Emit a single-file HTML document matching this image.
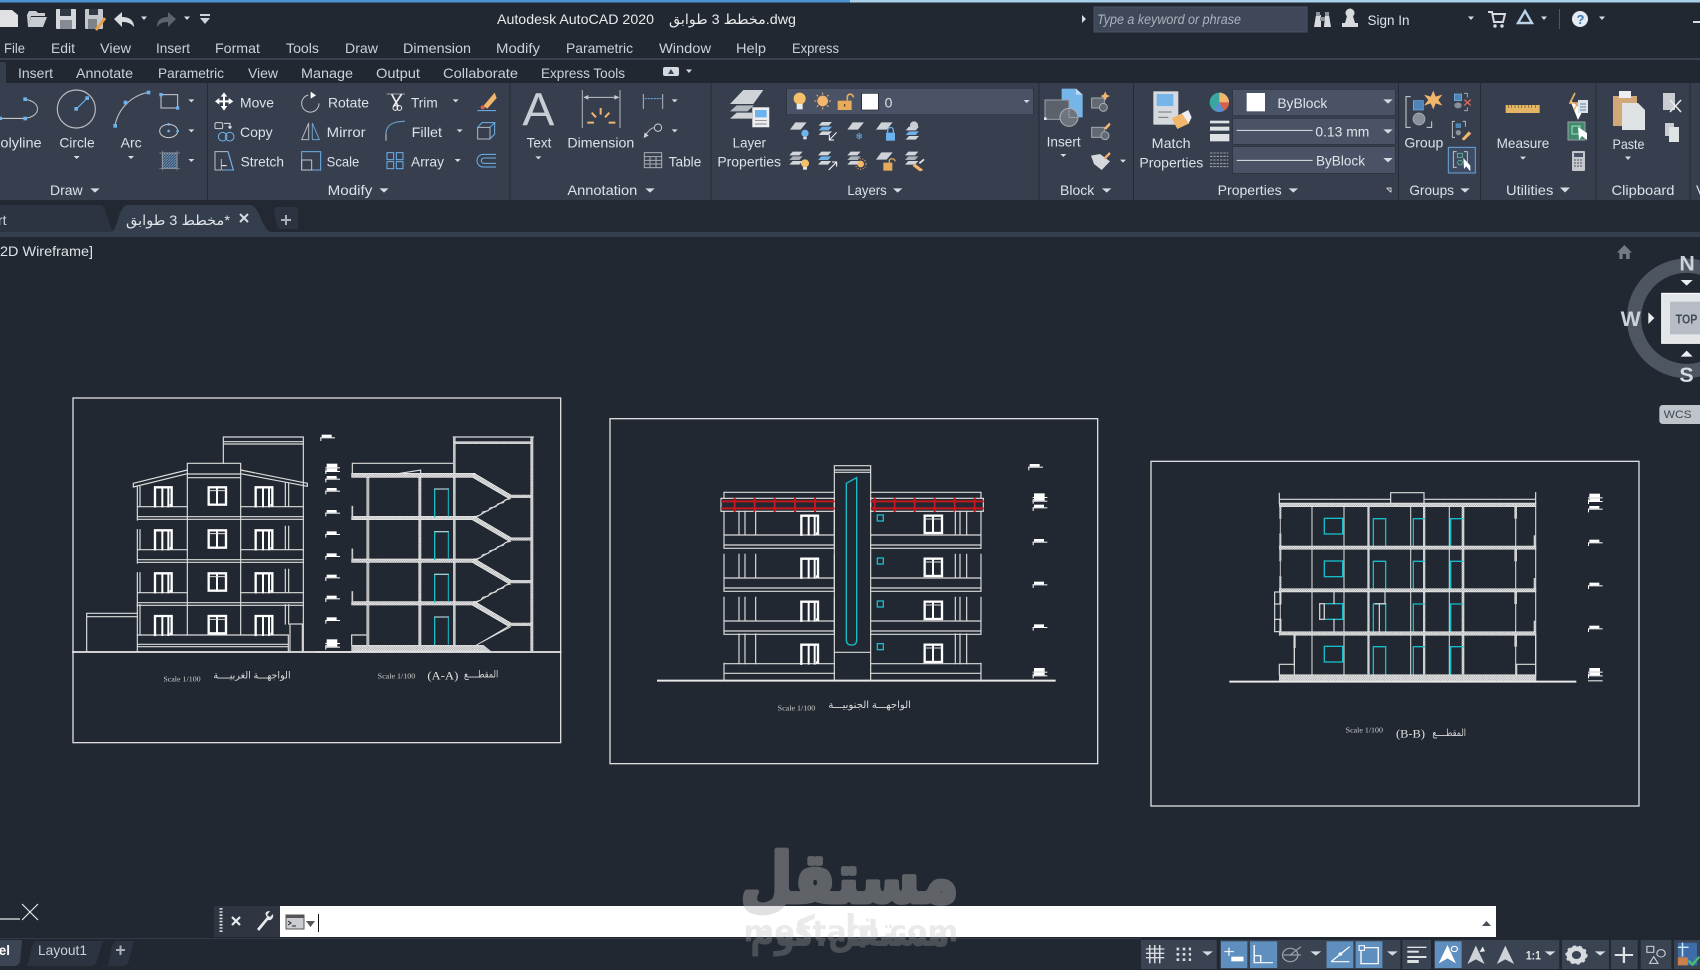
<!DOCTYPE html>
<html><head><meta charset="utf-8"><title>Autodesk AutoCAD 2020</title>
<style>
html,body{margin:0;padding:0;background:#212831;overflow:hidden}
svg{display:block;position:absolute;left:0;top:0}
text{font-family:"Liberation Sans","DejaVu Sans",sans-serif}
.m{fill:#c9d1da;font-size:14px}
.s{font-family:"Liberation Serif","DejaVu Sans",serif;fill:#cfcfcf}
.r text{fill:#d9e1e9;font-size:42px}
.ln{fill:none;stroke:#d8d8d8;stroke-width:3}
</style></head><body>
<svg width="1700" height="970" viewBox="0 0 1700 970" xmlns="http://www.w3.org/2000/svg">
<defs>
<pattern id="h" width="7" height="7" patternUnits="userSpaceOnUse"><rect width="7" height="7" fill="#e2e2e2"/><circle cx="2" cy="2" r="1.1" fill="#4a4f56"/><circle cx="5.5" cy="5.5" r="1.1" fill="#4a4f56"/></pattern>
<pattern id="hd" width="8" height="8" patternUnits="userSpaceOnUse"><rect width="8" height="8" fill="#3f4a5c"/><path d="M0,8L8,0" stroke="#6aa6dc" stroke-width="2.4"/></pattern>
<path id="a" d="M-9,-4H9L0,5Z" fill="#d5dbe2"/>
<path id="at" d="M-14,-6H14L0,7Z" fill="#d5dbe2"/>
<path id="ar" d="M-3,-1.5H3L0,2Z" fill="#d5dbe2"/>
<g id="wd" fill="none" stroke="#fff"><path d="M2,59V2H52V56" stroke-width="7"/><path d="M24,59V4M42,59V4" stroke-width="6"/><rect x="46" y="52" width="8" height="7" fill="#fff" stroke="none"/></g>
<g id="wc" fill="none" stroke="#fff"><rect x="2" y="2" width="52" height="52" stroke-width="7"/><path d="M27,2V54" stroke-width="6"/><path d="M4,12H52" stroke-width="3" stroke="#ddd"/></g>
<g id="mk" fill="#fff"><rect x="4" y="-8" width="30" height="8"/><rect x="0" y="0" width="44" height="3"/><rect x="0" y="0" width="3" height="11"/></g>
<g id="mb" fill="#fff"><rect x="4" y="-14" width="32" height="11"/><rect x="0" y="-3" width="44" height="3"/><rect x="4" y="0" width="32" height="8"/><rect x="0" y="8" width="44" height="3"/><rect x="0" y="3" width="3" height="14"/></g>
<g id="para"><path d="M0,22L16,0H50L32,22Z" fill="#cfd3d8"/></g>
<g id="stk"><path d="M0,11L10,0H40L30,11Z" fill="#d2d5d9"/><path d="M0,25L10,14H40L30,25Z" fill="#aab0b7"/><path d="M0,39L10,28H40L30,39Z" fill="#d2d5d9"/></g>
<g id="stb"><path d="M0,11L10,0H40L30,11Z" fill="#d2d5d9"/><path d="M0,25L10,14H40L30,25Z" fill="#6fb1e6"/><path d="M0,39L10,28H40L30,39Z" fill="#d2d5d9"/></g>

<!-- Section A-A floor -->
<g id="fa">
<path d="M1243,250L1358,318L1346,325L1238,262Z" fill="url(#h)" stroke="#eee" stroke-width="2"/>
<path d="M1352,326L1335,330L1330,338L1313,342L1308,350L1290,354L1285,362L1268,366L1263,374L1245,380" fill="none" stroke="#ddd" stroke-width="3"/>
<path d="M1358,318L1245,384" fill="none" stroke="#ddd" stroke-width="3"/>
<rect x="1355" y="315" width="60" height="8" fill="url(#h)" stroke="#ddd" stroke-width="1.5"/>
<rect x="875" y="379" width="370" height="10" fill="url(#h)" stroke="#eee" stroke-width="2"/>
<path d="M1124,380V297H1165" fill="none" stroke="#18bdc9" stroke-width="4"/>
<path d="M1124,297H1165" fill="none" stroke="#ccc" stroke-width="3"/>
<path d="M1165,300V380" fill="none" stroke="#18bdc9" stroke-width="3" stroke-dasharray="6 3"/>
<path d="M877,350V380" stroke="#ccc" stroke-width="5"/>
</g>

<!-- Facade west floor -->
<g id="fw" fill="none" stroke="#dcdcdc" stroke-width="3.5">
<path d="M232,350H382M542,350H730M232,380H730M232,388H730M240,290V350M232,290V390M676,280V350M686,280V350"/>
<use href="#wd" x="283" y="290"/><use href="#wc" x="444" y="290"/><use href="#wd" x="585" y="290"/>
</g>

<!-- South floor -->
<g id="fs" fill="none" stroke="#dcdcdc" stroke-width="3.5">
<path d="M372,304V415M703,304V415M417,304V375M435,304V375M467,304V375M372,375H703M372,405H703M372,415H703"/>
<path d="M812,375H1143M812,405H1143M812,415H1143M1143,304V415M1066,304V375M1080,304V375M1100,304V375"/>
<use href="#wd" x="602" y="315"/><use href="#wc" x="972" y="315"/>
<rect x="832" y="315" width="18" height="18" stroke="#18bdc9" stroke-width="4"/>
</g>

<!-- B-B floor -->
<g id="fb">
<path d="M516,170V289M612,170V289M812,170V289M928,170V289M1187,170V289" stroke="#c8c8c8" stroke-width="3.5"/>
<rect x="682" y="170" width="7" height="119" fill="url(#h)"/><rect x="849" y="170" width="7" height="119" fill="url(#h)"/><rect x="965" y="170" width="8" height="119" fill="url(#h)"/><rect x="1123" y="170" width="8" height="36" fill="url(#h)"/><path d="M1127,206V289" stroke="#c8c8c8" stroke-width="3.5"/>
<rect x="553" y="205" width="55" height="47" fill="none" stroke="#18bdc9" stroke-width="4"/>
<path d="M700,289V206H737V289M820,289V206H852M932,289V206H968" fill="none" stroke="#18bdc9" stroke-width="4"/>
</g>
</defs>

<rect width="1700" height="970" fill="#212831"/>
<!-- top bar -->
<rect width="1700" height="2.5" fill="#4c94cf"/>
<rect x="850" width="850" height="2.5" fill="#a9d2ea"/>

<!-- QAT -->
<g>
<path d="M0,10H12L18,15V27H0Z" fill="#dfe1e3"/>
<path d="M27,15L29,11H36L38,13H45V16H31L28,27Z M31,17H47L43,27H28Z" fill="#c9ccd0"/>
<rect x="56" y="9" width="20" height="20" rx="1" fill="#d5d7da"/><rect x="60" y="9" width="11" height="7" fill="#323a46"/><rect x="60" y="20" width="12" height="9" fill="#878c94"/>
<rect x="85" y="9" width="18" height="20" rx="1" fill="#c4c7cb"/><rect x="89" y="9" width="9" height="6" fill="#323a46"/><rect x="88" y="19" width="9" height="10" fill="#7e838b"/><path d="M96,30L105,18" stroke="#e8a04a" stroke-width="3"/>
<path d="M114,19L122,12V17C129,17 134,20 134,27C131,23 127,22 122,22V27Z" fill="#d9dbde"/>
<path d="M176,19L168,12V17C161,17 157,20 157,27C160,23 163,22 168,22V27Z" fill="#5c636d"/>
<use href="#ar" x="144" y="18"/><use href="#ar" x="187" y="18"/>
<rect x="200" y="14" width="10" height="2" fill="#cfd3d8"/><path d="M200,18H210L205,24Z" fill="#cfd3d8"/>
</g>
<text x="497" y="24" fill="#e8eaec" font-size="14" textLength="157" lengthAdjust="spacingAndGlyphs">Autodesk AutoCAD 2020</text>
<text x="669" y="24" fill="#e8eaec" font-size="14" textLength="127" lengthAdjust="spacingAndGlyphs">مخطط 3 طوابق.dwg</text>

<path d="M1082,15L1086,19L1082,23Z" fill="#d5dbe2"/>
<rect x="1094" y="7" width="213" height="25" fill="#3f4859" stroke="#4a5568"/>
<text x="1097" y="24" fill="#a9b2bc" font-size="13.5" font-style="italic" textLength="144" lengthAdjust="spacingAndGlyphs">Type a keyword or phrase</text>
<path d="M1314,27L1316,15H1321L1321,27ZM1324,27L1325,15H1329L1331,27Z" fill="#d8dadd"/><rect x="1316" y="12" width="4" height="4" fill="#8d929a"/><rect x="1325" y="12" width="4" height="4" fill="#8d929a"/><rect x="1320" y="17" width="5" height="4" fill="#8d929a"/>
<circle cx="1350" cy="13" r="4.5" fill="#d8dadd"/><path d="M1347,16H1353L1355,23H1358V27H1342V23H1345Z" fill="#d8dadd"/>
<text x="1367.5" y="25" fill="#dfe3e7" font-size="14" textLength="42" lengthAdjust="spacingAndGlyphs">Sign In</text>
<use href="#ar" x="1471" y="18"/>
<path d="M1488,12H1492L1494,22H1503L1505,14H1493" fill="none" stroke="#d8dadd" stroke-width="2"/><circle cx="1495" cy="26" r="1.7" fill="#d8dadd"/><circle cx="1502" cy="26" r="1.7" fill="#d8dadd"/>
<path d="M1525,11L1532,23H1518Z" fill="none" stroke="#b9d2e8" stroke-width="2.4"/>
<use href="#ar" x="1544" y="18"/>
<rect x="1559" y="9" width="1" height="20" fill="#4c5563"/>
<circle cx="1580" cy="19" r="8" fill="#e5ebf1"/><text x="1576.5" y="24" font-size="13" font-weight="bold" fill="#3d78b1">?</text>
<use href="#ar" x="1602" y="18"/>
<rect x="1693" y="21" width="7" height="2" fill="#d8dadd"/>

<!-- Menu -->
<g class="m">
<text class="m" x="4" y="53" textLength="21" lengthAdjust="spacingAndGlyphs">File</text>
<text class="m" x="51" y="53" textLength="24" lengthAdjust="spacingAndGlyphs">Edit</text>
<text class="m" x="100" y="53" textLength="31" lengthAdjust="spacingAndGlyphs">View</text>
<text class="m" x="156" y="53" textLength="34" lengthAdjust="spacingAndGlyphs">Insert</text>
<text class="m" x="215" y="53" textLength="45" lengthAdjust="spacingAndGlyphs">Format</text>
<text class="m" x="286" y="53" textLength="33" lengthAdjust="spacingAndGlyphs">Tools</text>
<text class="m" x="345" y="53" textLength="33" lengthAdjust="spacingAndGlyphs">Draw</text>
<text class="m" x="403" y="53" textLength="68" lengthAdjust="spacingAndGlyphs">Dimension</text>
<text class="m" x="496" y="53" textLength="44" lengthAdjust="spacingAndGlyphs">Modify</text>
<text class="m" x="566" y="53" textLength="67" lengthAdjust="spacingAndGlyphs">Parametric</text>
<text class="m" x="659" y="53" textLength="52" lengthAdjust="spacingAndGlyphs">Window</text>
<text class="m" x="736" y="53" textLength="30" lengthAdjust="spacingAndGlyphs">Help</text>
<text class="m" x="792" y="53" textLength="47" lengthAdjust="spacingAndGlyphs">Express</text>
</g>
<rect y="58" width="1700" height="2" fill="#39424f"/>
<!-- Ribbon tabs -->
<path d="M0,62H4Q6,62 6,64V83H0Z" fill="#353e4c"/>
<text class="m" x="18" y="78" textLength="35" lengthAdjust="spacingAndGlyphs">Insert</text>
<text class="m" x="76" y="78" textLength="57" lengthAdjust="spacingAndGlyphs">Annotate</text>
<text class="m" x="158" y="78" textLength="66" lengthAdjust="spacingAndGlyphs">Parametric</text>
<text class="m" x="248" y="78" textLength="30" lengthAdjust="spacingAndGlyphs">View</text>
<text class="m" x="301" y="78" textLength="52" lengthAdjust="spacingAndGlyphs">Manage</text>
<text class="m" x="376" y="78" textLength="44" lengthAdjust="spacingAndGlyphs">Output</text>
<text class="m" x="443" y="78" textLength="75" lengthAdjust="spacingAndGlyphs">Collaborate</text>
<text class="m" x="541" y="78" textLength="84" lengthAdjust="spacingAndGlyphs">Express Tools</text>
<rect x="663" y="67" width="16" height="9" rx="2" fill="#d5d9dd"/><path d="M668,74L671,69L674,74Z" fill="#3a4250"/>
<use href="#ar" x="689" y="71"/>

<!-- Ribbon -->
<rect y="83" width="1700" height="117" fill="#373f4e"/>
<path d="M207.5,83V200M510,83V200M711,83V200M1039,83V200M1133.5,83V200M1398.5,83V200M1480.5,83V200M1596,83V200M1690,83V200" stroke="#262c37" stroke-width="1"/>

<!-- Draw & Modify -->
<g class="r" transform="translate(0,84) scale(.33333)">
<path d="M0,103H75" class="ln" stroke="#cfd3d7"/><path d="M75,46C125,52 125,98 75,103" fill="none" stroke="#bfc3c8" stroke-width="3"/>
<g fill="#6cb2ec"><rect x="70" y="40" width="11" height="11"/><rect x="70" y="98" width="11" height="11"/><rect x="-4" y="98" width="10" height="10"/></g>
<circle cx="229" cy="75" r="57" fill="none" stroke="#b8bcc2" stroke-width="3.5"/><path d="M229,75L262,42" stroke="#6cb2ec" stroke-width="3.5"/><rect x="223" y="69" width="11" height="11" fill="#6cb2ec"/><rect x="256" y="37" width="11" height="11" fill="#6cb2ec"/>
<path d="M345,125C355,72 395,35 445,25" fill="none" stroke="#b8bcc2" stroke-width="3.5"/><g fill="#6cb2ec"><rect x="340" y="120" width="11" height="11"/><rect x="371" y="50" width="11" height="11"/><rect x="440" y="20" width="11" height="11"/></g>
<rect x="483" y="32" width="50" height="40" fill="none" stroke="#c9cdd2" stroke-width="3"/><rect x="478" y="27" width="10" height="10" fill="#6cb2ec"/><rect x="528" y="67" width="10" height="10" fill="#6cb2ec"/>
<ellipse cx="506" cy="141" rx="27" ry="20" fill="none" stroke="#c9cdd2" stroke-width="3"/><circle cx="506" cy="141" r="4" fill="#6cb2ec"/><circle cx="506" cy="121" r="4" fill="#6cb2ec"/><circle cx="533" cy="141" r="4" fill="#6cb2ec"/>
<rect x="487" y="207" width="44" height="46" fill="url(#hd)" stroke="#a8adb4" stroke-width="3"/><path d="M478,207H540M478,253H540M487,200V260M531,200V260" stroke="#8d939b" stroke-width="2"/>
<text x="-28" y="191" textLength="153" lengthAdjust="spacingAndGlyphs">Polyline</text>
<text x="178" y="191" textLength="106" lengthAdjust="spacingAndGlyphs">Circle</text>
<text x="362" y="191" textLength="63" lengthAdjust="spacingAndGlyphs">Arc</text>
<use href="#a" x="230" y="220"/><use href="#a" x="393" y="220"/><use href="#a" x="574" y="50"/><use href="#a" x="574" y="140"/><use href="#a" x="574" y="229"/>
<text x="150" y="333" textLength="98" lengthAdjust="spacingAndGlyphs">Draw</text><use href="#at" x="285" y="319"/>

<g fill="#fff"><path d="M645,52L658,42V49H669V38H662L672,25L682,38H675V49H686V42L700,52L686,62V55H675V66H682L672,80L662,66H669V55H658V62Z"/></g>
<text x="720" y="70" textLength="102" lengthAdjust="spacingAndGlyphs">Move</text>
<rect x="645" y="116" width="23" height="18" rx="4" fill="none" stroke="#cfd3d7" stroke-width="3"/><path d="M672,118H690V128" fill="none" stroke="#dfe2e5" stroke-width="3"/><path d="M683,127H697L690,136Z" fill="#dfe2e5"/>
<circle cx="668" cy="158" r="13" fill="none" stroke="#6cb2ec" stroke-width="3"/><circle cx="689" cy="158" r="13" fill="none" stroke="#6cb2ec" stroke-width="3"/>
<text x="720" y="159" textLength="98" lengthAdjust="spacingAndGlyphs">Copy</text>
<path d="M664,258H645V203H684L700,258H666" fill="none" stroke="#bcc0c6" stroke-width="3"/><path d="M684,203L700,258H668" fill="none" stroke="#6cb2ec" stroke-width="3"/><path d="M664,245H680" stroke="#fff" stroke-width="3"/><path d="M664,225V258" stroke="#bcc0c6" stroke-width="3"/>
<text x="722" y="248" textLength="130" lengthAdjust="spacingAndGlyphs">Stretch</text>
<path d="M925,33A26,26 0 1 0 957,58" fill="none" stroke="#c0c4c9" stroke-width="3"/><path d="M932,23L948,34L932,44Z" fill="#fff"/>
<text x="984" y="70" textLength="123" lengthAdjust="spacingAndGlyphs">Rotate</text>
<path d="M905,167L926,117V167Z" fill="none" stroke="#b4b8be" stroke-width="3"/><path d="M937,117L958,167H937Z" fill="none" stroke="#6c9fca" stroke-width="3"/>
<text x="980" y="159" textLength="117" lengthAdjust="spacingAndGlyphs">Mirror</text>
<rect x="905" y="203" width="57" height="55" fill="none" stroke="#6cb2ec" stroke-width="3"/><rect x="905" y="228" width="30" height="30" fill="none" stroke="#c0c4c9" stroke-width="3"/>
<text x="980" y="248" textLength="98" lengthAdjust="spacingAndGlyphs">Scale</text>
<path d="M1160,30H1215" stroke="#9ea3aa" stroke-width="3"/><path d="M1175,30L1195,68M1205,30L1180,68" stroke="#eee" stroke-width="5"/><circle cx="1186" cy="72" r="7" fill="none" stroke="#eee" stroke-width="3"/><circle cx="1198" cy="72" r="7" fill="none" stroke="#eee" stroke-width="3"/>
<text x="1233" y="70" textLength="80" lengthAdjust="spacingAndGlyphs">Trim</text><use href="#a" x="1367" y="50"/>
<path d="M1158,170V150" stroke="#b4b8be" stroke-width="3.5"/><path d="M1158,150C1158,125 1175,112 1215,112" fill="none" stroke="#6c9fca" stroke-width="3.5"/>
<text x="1235" y="159" textLength="91" lengthAdjust="spacingAndGlyphs">Fillet</text><use href="#a" x="1379" y="140"/>
<g fill="none" stroke="#6cb2ec" stroke-width="3"><rect x="1161" y="206" width="20" height="21"/><rect x="1189" y="206" width="20" height="21"/><rect x="1161" y="233" width="20" height="21"/><rect x="1189" y="233" width="20" height="21"/></g>
<text x="1233" y="248" textLength="99" lengthAdjust="spacingAndGlyphs">Array</text><use href="#a" x="1373" y="229"/>
<path d="M1450,66L1484,26L1490,42L1462,74Z" fill="#f2b56c"/><circle cx="1448" cy="70" r="6" fill="#e45c4a"/><path d="M1432,80H1488" stroke="#6cb2ec" stroke-width="3"/>
<path d="M1433,130H1470V165H1433Z" fill="none" stroke="#b4b8be" stroke-width="3"/><path d="M1433,130L1446,116H1484L1470,130M1484,116V150L1470,165" fill="none" stroke="#6cb2ec" stroke-width="3"/>
<path d="M1488,211H1450A18,18 0 0 0 1450,249H1488M1488,222H1452A8,8 0 0 0 1452,238H1488" fill="none" stroke="#6cb2ec" stroke-width="3"/>
<text x="983" y="333" textLength="134" lengthAdjust="spacingAndGlyphs">Modify</text><use href="#at" x="1152" y="319"/>
</g>

<!-- Annotation, Layers -->
<g class="r" transform="translate(510,84) scale(.33333)">
<text x="37" y="125" style="font-size:138px;fill:#c8cdd3" textLength="96" lengthAdjust="spacingAndGlyphs">A</text>
<text x="50" y="191" textLength="74" lengthAdjust="spacingAndGlyphs">Text</text><use href="#a" x="85" y="221"/>
<path d="M217,18V132M330,18V132" stroke="#b4b8be" stroke-width="3"/><path d="M222,40H326" stroke="#c0c4c9" stroke-width="3"/><path d="M220,40L235,33V47ZM328,40L313,33V47Z" fill="#c9cdd2"/>
<g stroke="#f2b56c" stroke-width="6"><path d="M272,72V92M245,86L258,100M298,86L285,100M232,116H252M296,116H316"/></g>
<text x="172" y="190" textLength="201" lengthAdjust="spacingAndGlyphs">Dimension</text>
<path d="M400,30V75M458,30V75" stroke="#b4b8be" stroke-width="3"/><path d="M404,44H454" stroke="#6cb2ec" stroke-width="3" stroke-dasharray="6 3"/><use href="#a" x="494" y="50"/>
<circle cx="444" cy="131" r="11" fill="none" stroke="#cfd3d7" stroke-width="3"/><path d="M433,131C422,132 415,142 405,155" fill="none" stroke="#b4b8be" stroke-width="3"/><path d="M401,162L404,145L416,155Z" fill="#cfd3d7"/><use href="#a" x="494" y="140"/>
<g fill="none" stroke="#a9aeb5" stroke-width="3"><rect x="403" y="206" width="52" height="45"/><path d="M403,218H455M403,229H455M403,240H455M420,218V251M438,218V251"/></g>
<text x="476" y="248" textLength="98" lengthAdjust="spacingAndGlyphs">Table</text>
<text x="172" y="333" textLength="210" lengthAdjust="spacingAndGlyphs">Annotation</text><use href="#at" x="420" y="319"/>

<g><path d="M660,60L700,18H760L730,60Z" fill="#cfd3d8"/><path d="M660,82L680,64H732L712,82Z" fill="#b3b8be"/><path d="M660,104L680,86H728V104Z" fill="#cfd3d8"/></g>
<rect x="727" y="70" width="51" height="60" fill="#eceef0" stroke="#8a9099"/><rect x="735" y="78" width="35" height="22" fill="#6cb2ec"/><path d="M735,110H770M735,120H770" stroke="#666" stroke-width="2"/>
<text x="668" y="190" textLength="100" lengthAdjust="spacingAndGlyphs">Layer</text>
<text x="622" y="248" textLength="191" lengthAdjust="spacingAndGlyphs">Properties</text>
<rect x="830" y="13" width="740" height="79" fill="#4a5366" stroke="#2b323e" stroke-width="2"/>
<circle cx="869" cy="44" r="18" fill="#f5c26b"/><path d="M860,60H878V76H860Z" fill="#e8eaec"/>
<circle cx="938" cy="51" r="16" fill="#f2b66d"/><path d="M938,26V76M913,51H963M920,33L956,69M956,33L920,69" stroke="#f2b66d" stroke-width="3" stroke-dasharray="6 38" stroke-dashoffset="0"/>
<rect x="983" y="50" width="42" height="28" fill="#e7a95a"/><path d="M1012,50V38C1012,28 1030,28 1030,40" fill="none" stroke="#e7a95a" stroke-width="5"/><rect x="1002" y="60" width="4" height="8" fill="#5a4a30"/>
<rect x="1055" y="28" width="50" height="50" fill="#fff" stroke="#1a1f26" stroke-width="2"/>
<text x="1124" y="70" style="fill:#dfe3e7">0</text>
<use href="#a" x="1550" y="52"/>
<!-- row 1 -->
<use href="#para" x="840" y="115"/><circle cx="885" cy="148" r="11" fill="#6cb2ec"/><rect x="880" y="158" width="10" height="8" fill="#dfe2e5"/>
<use href="#stb" x="926" y="114"/><path d="M980,145L960,166M958,153V168H972" stroke="#fff" stroke-width="3" fill="none"/>
<use href="#para" x="1012" y="115"/><text x="1036" y="166" style="font-size:28px;fill:#6cb2ec">❄</text>
<use href="#para" x="1098" y="115"/><rect x="1128" y="146" width="27" height="24" fill="#6cb2ec"/><path d="M1133,146V138C1133,128 1150,128 1150,138V146" fill="none" stroke="#6cb2ec" stroke-width="4"/>
<use href="#stb" x="1187" y="128"/><circle cx="1212" cy="124" r="12" fill="#c9cdd2"/>
<!-- row 2 -->
<use href="#stk" x="838" y="203"/><circle cx="885" cy="238" r="12" fill="#f5c26b"/><rect x="879" y="249" width="12" height="8" fill="#dfe2e5"/>
<use href="#stb" x="924" y="203"/><path d="M956,258L978,236M966,234H980V248" stroke="#fff" stroke-width="3" fill="none"/>
<use href="#stk" x="1012" y="203"/><circle cx="1052" cy="240" r="10" fill="#f2b66d"/><circle cx="1052" cy="240" r="16" fill="none" stroke="#f2b66d" stroke-width="3" stroke-dasharray="3 5"/>
<use href="#para" x="1098" y="205"/><rect x="1120" y="236" width="27" height="24" fill="#e7a95a"/><path d="M1138,236V230C1138,222 1155,222 1155,232" fill="none" stroke="#e7a95a" stroke-width="4"/>
<use href="#stk" x="1185" y="203"/><path d="M1214,238L1240,258L1230,262L1208,246Z" fill="#f2b56c"/><path d="M1228,238L1242,226" stroke="#e8eaec" stroke-width="5"/>
<text x="1012" y="333" textLength="118" lengthAdjust="spacingAndGlyphs">Layers</text><use href="#at" x="1163" y="319"/>
</g>

<!-- Block, Properties, Groups, Utilities -->
<g class="r" transform="translate(1040,84) scale(.33333)">
<path d="M65,14H108L128,32V100H65Z" fill="#76b5e8"/><path d="M108,14L128,32H108Z" fill="#bcdcf4"/>
<rect x="15" y="48" width="72" height="58" fill="#5b626c" stroke="#9aa0a8" stroke-width="3"/><circle cx="87" cy="100" r="27" fill="#6e747d" stroke="#aab0b7" stroke-width="3"/><path d="M87,75V100H112" stroke="#aab0b7" stroke-width="2" fill="none"/><rect x="12" y="100" width="8" height="8" fill="#e2e4e6"/>
<text x="20" y="188" textLength="102" lengthAdjust="spacingAndGlyphs">Insert</text><use href="#a" x="70" y="214"/>
<g><rect x="155" y="42" width="38" height="30" fill="#626973" stroke="#a6acb3" stroke-width="3"/><circle cx="190" cy="70" r="12" fill="#626973" stroke="#a6acb3" stroke-width="3"/><path d="M196,22L200,32L210,36L200,41L196,50L191,41L182,36L191,32Z" fill="#f2b56c"/></g>
<g><rect x="155" y="130" width="38" height="30" fill="#626973" stroke="#a6acb3" stroke-width="3"/><circle cx="195" cy="155" r="12" fill="#626973" stroke="#a6acb3" stroke-width="3"/><path d="M192,132L208,116L212,122L198,138Z" fill="#f2b56c"/></g>
<path d="M153,215L180,210L210,232L185,258L162,240Z" fill="#d5d8dc"/><path d="M190,222L208,204L212,210L196,226Z" fill="#f2b56c"/><use href="#a" x="249" y="231"/>
<text x="60" y="333" textLength="103" lengthAdjust="spacingAndGlyphs">Block</text><use href="#at" x="200" y="319"/>

<rect x="340" y="22" width="75" height="100" fill="#d6d9dd"/><rect x="350" y="30" width="50" height="36" fill="#76b5e8"/><path d="M355,84H395M355,100H385" stroke="#777" stroke-width="3"/>
<path d="M395,103L425,88L448,118L412,135Z" fill="#f2b56c"/><path d="M425,88L445,78L455,100L446,118Z" fill="#eceef0"/>
<text x="335" y="192" textLength="117" lengthAdjust="spacingAndGlyphs">Match</text><text x="298" y="250" textLength="192" lengthAdjust="spacingAndGlyphs">Properties</text>
<circle cx="538" cy="55" r="29" fill="#3aa6a0"/><path d="M538,55V26A29,29 0 0 1 567,55Z" fill="#f2b56c"/><path d="M538,55H567A29,29 0 0 1 552,80Z" fill="#d95f4a"/><path d="M538,55L552,80A29,29 0 0 1 520,78Z" fill="#5c8fd0"/>
<g fill="#dfe2e5"><rect x="510" y="110" width="58" height="8"/><rect x="510" y="128" width="58" height="12"/><rect x="510" y="150" width="58" height="22"/></g>
<path d="M510,207H565M510,217H565M510,228H565M510,239H565M510,248H565" stroke="#b9bdc3" stroke-width="2.5" stroke-dasharray="7 3"/>
<g fill="#4a5366" stroke="#2b323e" stroke-width="2"><rect x="578" y="16" width="488" height="79"/><rect x="578" y="103" width="488" height="78"/><rect x="578" y="188" width="488" height="80"/></g>
<rect x="620" y="27" width="55" height="55" fill="#fff"/><text x="712" y="72" textLength="150" lengthAdjust="spacingAndGlyphs" style="fill:#e0e4e9">ByBlock</text>
<path d="M590,139H818" stroke="#e0e4e9" stroke-width="3"/><text x="826" y="158" textLength="162" lengthAdjust="spacingAndGlyphs" style="fill:#e0e4e9">0.13 mm</text>
<path d="M590,229H818" stroke="#e0e4e9" stroke-width="3"/><text x="828" y="245" textLength="147" lengthAdjust="spacingAndGlyphs" style="fill:#e0e4e9">ByBlock</text>
<use href="#at" x="1044" y="52"/><use href="#at" x="1044" y="142"/><use href="#at" x="1044" y="228"/>
<text x="533" y="333" textLength="192" lengthAdjust="spacingAndGlyphs">Properties</text><use href="#at" x="760" y="319"/>
<path d="M1040,312H1053V325M1040,312L1053,325" stroke="#cfd3d7" stroke-width="3" fill="none"/>

<path d="M1112,38H1098V130H1112M1160,130H1175V112" fill="none" stroke="#cfd3d7" stroke-width="3"/>
<rect x="1120" y="50" width="30" height="28" fill="#4f85b6" stroke="#76b5e8" stroke-width="2"/><circle cx="1137" cy="105" r="18" fill="#8a9099" stroke="#b4b8be" stroke-width="2"/>
<path d="M1180,20L1187,38L1207,32L1195,48L1207,65L1187,58L1180,76L1172,58L1152,65L1165,48L1152,32L1172,38Z" fill="#f2b56c"/>
<text x="1093" y="190" textLength="117" lengthAdjust="spacingAndGlyphs">Group</text>
<rect x="1243" y="30" width="22" height="20" fill="#4f85b6" stroke="#76b5e8" stroke-width="2"/><ellipse cx="1254" cy="64" rx="11" ry="9" fill="#8a9099"/><path d="M1272,28H1282V40M1282,70V80H1272" stroke="#b4b8be" stroke-width="2.5" fill="none"/><path d="M1273,47L1292,64M1292,47L1273,64" stroke="#e06a55" stroke-width="4"/>
<path d="M1245,112H1237V160H1245M1268,112H1276V128" stroke="#cfd3d7" stroke-width="2.5" fill="none"/><rect x="1247" y="118" width="16" height="14" fill="#4f85b6"/><circle cx="1255" cy="146" r="8" fill="#8a9099"/><path d="M1265,165L1286,142L1294,149L1272,170Z" fill="#f2b56c"/>
<rect x="1225" y="190" width="81" height="77" fill="#3e4b62" stroke="#6aa6dc" stroke-width="3"/><path d="M1250,203H1240V250H1250M1272,203H1282V250" stroke="#d5d8dc" stroke-width="2.5" fill="none"/><rect x="1252" y="208" width="15" height="12" fill="none" stroke="#5fc48d" stroke-width="2.5"/><circle cx="1260" cy="236" r="7" fill="none" stroke="#5fc48d" stroke-width="2.5"/><path d="M1270,222L1272,255L1279,247L1291,262L1291,245Z" fill="#fff"/>
<text x="1108" y="333" textLength="134" lengthAdjust="spacingAndGlyphs">Groups</text><use href="#at" x="1275" y="319"/>

<rect x="1397" y="63" width="102" height="24" fill="#e3b565"/><path d="M1405,63V72M1415,63V72M1425,63V72M1435,63V72M1445,63V72M1455,63V72M1465,63V72M1475,63V72M1487,63V72" stroke="#6d5a30" stroke-width="2"/>
<text x="1370" y="192" textLength="158" lengthAdjust="spacingAndGlyphs">Measure</text><use href="#a" x="1449" y="222"/>
<text x="1398" y="333" textLength="142" lengthAdjust="spacingAndGlyphs">Utilities</text>
</g>
<path d="M1560,187.5H1570L1565,192.5Z" fill="#d5dbe2"/>
<!-- far right ribbon -->
<path d="M1570,100L1578,120L1583,110Z" fill="#fff"/><path d="M1575,93L1570,103H1578L1574,110" fill="none" stroke="#f2b56c" stroke-width="1.6"/><rect x="1578" y="100" width="10" height="13" fill="#dfe2e5"/><path d="M1580,104H1586M1580,107H1586M1580,110H1586" stroke="#4f85b6"/>
<rect x="1568" y="122" width="17" height="18" fill="#3f8a6a" stroke="#9aa0a8"/><rect x="1572" y="126" width="8" height="8" fill="none" stroke="#a7e0c2" stroke-width="1"/><path d="M1578,127L1579,140L1582,136L1587,140L1587,133Z" fill="#fff"/>
<rect x="1572" y="151" width="13" height="20" rx="1" fill="#c4c8cd"/><rect x="1574" y="153" width="9" height="4" fill="#4a5160"/><path d="M1574,160H1583M1574,163H1583M1574,166H1583" stroke="#4a5160" stroke-dasharray="2 1"/>
<rect x="1613" y="96" width="24" height="30" fill="#d3a878"/><rect x="1619" y="91" width="12" height="7" fill="#eceef0"/><path d="M1622,103H1638L1645,110V130H1622Z" fill="#dfe2e5"/>
<text x="1612.5" y="149" font-size="14" fill="#d9e1e9" textLength="32" lengthAdjust="spacingAndGlyphs">Paste</text><use href="#ar" x="1628" y="158"/>
<rect x="1663" y="93" width="12" height="17" fill="#c9cdd2"/><path d="M1670,100L1681,112M1681,100L1670,112" stroke="#e8eaec" stroke-width="1.6"/>
<rect x="1665" y="123" width="9" height="13" fill="#c9cdd2"/><rect x="1669" y="127" width="10" height="15" fill="#e0e3e6"/>
<text x="1611.5" y="195" font-size="14" fill="#d9e1e9" textLength="63" lengthAdjust="spacingAndGlyphs">Clipboard</text>
<text x="1696" y="195" font-size="14" fill="#d9e1e9">V</text>

<!-- Doc tabs -->
<rect y="200" width="1700" height="32" fill="#222933"/>
<path d="M0,205H100C108,205 108,232 115,232H0Z" fill="#2d3441"/>
<text x="-2" y="225" font-size="14" fill="#c9d1da">rt</text>
<path d="M111,232C118,232 118,205 128,205H250C260,205 262,232 272,232Z" fill="#353e4c"/>
<text x="126" y="225" font-size="14" fill="#dfe3e7" textLength="104" lengthAdjust="spacingAndGlyphs">مخطط 3 طوابق*</text>
<path d="M240,214L248,222M248,214L240,222" stroke="#d5dbe2" stroke-width="2"/>
<path d="M274,210Q274,207 277,207H296Q298,207 298,210V229H280C276,229 276,220 274,210Z" fill="#2d3441"/>
<path d="M281,220H291M286,215V225" stroke="#a9b0b8" stroke-width="2"/>
<rect y="232" width="1700" height="5" fill="#353e4c"/>

<text x="-4" y="256" font-size="14" fill="#dfe3e7" textLength="97" lengthAdjust="spacingAndGlyphs">[2D Wireframe]</text>

<!-- Drawing A -->
<g transform="translate(60,390) scale(.33333)" stroke-linecap="square">
<rect x="39" y="24" width="1463" height="1034" fill="none" stroke="#dcdcdc" stroke-width="4"/>
<path d="M39,786H1502" stroke="#e8e8e8" stroke-width="5"/>
<g fill="none" stroke="#dcdcdc" stroke-width="3.5">
<path d="M490,220V141H730V786M490,155H730M490,162H730"/>
<path d="M382,735V220H542V735M382,252H542M382,263H542"/>
<path d="M220,280L382,240M220,291L382,251M220,280V291M542,240L742,280M542,251L742,289M742,280V289"/>
<path d="M232,735V786M232,735H685V786M232,763H685M232,770H685"/>
<path d="M232,644V735M240,644V735M676,644V702M686,644V702"/>
<rect x="690" y="702" width="37" height="84"/>
<path d="M80,786V670H232M80,680H232"/>
</g>
<use href="#fw" x="0" y="0"/><use href="#fw" x="0" y="129"/><use href="#fw" x="0" y="258"/>
<g fill="none" stroke="#dcdcdc" stroke-width="3.5"><use href="#wd" x="283" y="676"/><use href="#wc" x="444" y="676"/><use href="#wd" x="585" y="676"/></g>
<g><use href="#mk" x="781" y="142"/><use href="#mb" x="796" y="235"/><use href="#mk" x="796" y="266"/><use href="#mk" x="796" y="302"/><use href="#mk" x="796" y="368"/><use href="#mk" x="796" y="432"/><use href="#mk" x="796" y="498"/><use href="#mk" x="796" y="562"/><use href="#mk" x="796" y="625"/><use href="#mk" x="796" y="690"/><use href="#mb" x="796" y="762"/></g>
<path d="M770,786H870" stroke="#fff" stroke-width="3"/>
<!-- section -->
<g fill="none" stroke="#dcdcdc" stroke-width="3.5"><path d="M877,250V220H1180M1020,250L1082,240V252M875,735H920M875,735V765"/><path d="M1180,141H1420"/></g>
<rect x="1179" y="141" width="8" height="645" fill="#c4c4c4"/>
<rect x="1411" y="141" width="9" height="645" fill="url(#h)"/>
<rect x="1075" y="250" width="9" height="520" fill="url(#h)"/>
<rect x="919" y="262" width="9" height="505" fill="#b9b9b9"/>
<rect x="1180" y="154" width="238" height="8" fill="url(#h)"/>
<rect x="875" y="250" width="370" height="12" fill="url(#h)" stroke="#eee" stroke-width="2"/>
<use href="#fa"/><use href="#fa" y="128"/><use href="#fa" y="256"/>
<g transform="translate(0,384)"><path d="M1243,250L1358,318L1346,325L1238,262Z" fill="url(#h)" stroke="#eee" stroke-width="2"/><path d="M1358,318L1245,384M1352,326L1255,378" fill="none" stroke="#ddd" stroke-width="3"/><rect x="1355" y="315" width="60" height="8" fill="url(#h)" stroke="#ddd" stroke-width="1.5"/><path d="M1124,380V297H1165" fill="none" stroke="#18bdc9" stroke-width="4"/><path d="M1124,297H1165" stroke="#ccc" stroke-width="3"/><path d="M1165,300V380" stroke="#18bdc9" stroke-width="3" stroke-dasharray="6 3"/></g>
<path d="M875,766H1270L1292,784H875Z" fill="url(#h)" stroke="#ddd" stroke-width="2"/>
<text class="s" x="310" y="875" font-size="23" textLength="112" lengthAdjust="spacingAndGlyphs">Scale 1/100</text>
<text x="460" y="866" font-size="30" fill="#d8d8d8" textLength="232" lengthAdjust="spacingAndGlyphs">الواجهـــة الغربيــــة</text>
<text class="s" x="953" y="866" font-size="23" textLength="113" lengthAdjust="spacingAndGlyphs">Scale 1/100</text>
<text class="s" x="1102" y="868" font-size="34" textLength="93" lengthAdjust="spacingAndGlyphs" style="fill:#e0e0e0">(A-A)</text>
<text x="1212" y="862" font-size="30" fill="#d8d8d8" textLength="103" lengthAdjust="spacingAndGlyphs">المقطــــع</text>
</g>

<!-- Drawing B -->
<g transform="translate(600,410) scale(.33333)" stroke-linecap="square">
<rect x="30" y="26" width="1463" height="1035" fill="none" stroke="#dcdcdc" stroke-width="4"/>
<path d="M174,812H1364" stroke="#e8e8e8" stroke-width="6"/>
<g fill="none" stroke="#dcdcdc" stroke-width="3.5">
<path d="M703,812V167H812V812M703,180H812M703,187H812M703,727H812"/>
<path d="M372,265V247H703M1143,265V247H812"/>
<rect x="363" y="265" width="340" height="39"/><rect x="812" y="265" width="338" height="39"/>
<path d="M372,760V812M1143,760V812M372,761H703M812,761H1143M372,790H703M812,790H1143"/>
<path d="M417,672V761M435,672V761M467,672V761M1066,672V761M1080,672V761M1100,672V761"/>
</g>
<g stroke="#c4161c" stroke-width="6"><path d="M366,274H701M366,295H701M815,274H1148M815,295H1148M404,266V303M464,266V303M524,266V303M585,266V303M645,266V303M824,266V303M884,266V303M944,266V303M1004,266V303M1064,266V303M1124,266V303"/></g>
<path d="M739,220L770,203V690Q770,705 755,705Q739,705 739,690Z" fill="none" stroke="#18bdc9" stroke-width="4"/>
<use href="#fs"/><use href="#fs" y="129"/><use href="#fs" y="258"/>
<g fill="none" stroke="#dcdcdc" stroke-width="3.5"><use href="#wd" x="602" y="702"/><use href="#wc" x="972" y="702"/><rect x="832" y="701" width="18" height="18" stroke="#18bdc9" stroke-width="4"/></g>
<use href="#mk" x="1285" y="170"/><use href="#mb" x="1298" y="264"/><use href="#mk" x="1298" y="292"/><use href="#mk" x="1298" y="395"/><use href="#mk" x="1298" y="523"/><use href="#mk" x="1298" y="651"/><use href="#mb" x="1298" y="788"/>
<text class="s" x="533" y="901" font-size="23" textLength="113" lengthAdjust="spacingAndGlyphs">Scale 1/100</text>
<text x="685" y="894" font-size="30" fill="#d8d8d8" textLength="248" lengthAdjust="spacingAndGlyphs">الواجهـــة الجنوبيـــة</text>
</g>

<!-- Drawing C -->
<g transform="translate(1140,450) scale(.33333)" stroke-linecap="square">
<rect x="33" y="34" width="1464" height="1034" fill="none" stroke="#dcdcdc" stroke-width="4"/>
<path d="M271,695H1306" stroke="#e8e8e8" stroke-width="6"/>
<g fill="none" stroke="#dcdcdc" stroke-width="3.5"><path d="M418,160V130M1187,160V128M418,148H752M852,148H1187M752,160V128H852V160"/></g>
<use href="#fb"/><use href="#fb" y="128"/><use href="#fb" y="256"/><use href="#fb" y="384"/>
<rect x="418" y="168" width="6" height="38" fill="url(#h)"/><rect x="418" y="250" width="6" height="40" fill="url(#h)"/><rect x="418" y="296" width="6" height="38" fill="url(#h)"/><rect x="418" y="378" width="6" height="40" fill="url(#h)"/><rect x="418" y="424" width="6" height="38" fill="url(#h)"/><rect x="418" y="506" width="6" height="40" fill="url(#h)"/>
<path d="M421,206V250M421,334V378M421,462V506" stroke="#c8c8c8" stroke-width="3"/>
<rect x="1181" y="256" width="6" height="34" fill="url(#h)"/><rect x="1181" y="384" width="6" height="34" fill="url(#h)"/><rect x="1181" y="512" width="6" height="34" fill="url(#h)"/>
<rect x="460" y="556" width="7" height="38" fill="url(#h)"/><path d="M463,594V645" stroke="#c8c8c8" stroke-width="3.5"/>
<rect x="418" y="159" width="770" height="11" fill="url(#h)" stroke="#eee" stroke-width="1.5"/>
<rect x="418" y="288" width="770" height="10" fill="url(#h)" stroke="#eee" stroke-width="1.5"/>
<rect x="418" y="416" width="770" height="10" fill="url(#h)" stroke="#eee" stroke-width="1.5"/>
<rect x="418" y="545" width="770" height="11" fill="url(#h)" stroke="#eee" stroke-width="1.5"/>
<rect x="418" y="674" width="770" height="19" fill="url(#h)" stroke="#eee" stroke-width="1.5"/>
<rect x="420" y="556" width="40" height="88" fill="#212831"/>
<g fill="none" stroke="#dcdcdc" stroke-width="3.5">
<path d="M418,674V643H463V674M1130,674V643H1187V674M1187,556V643"/>
<path d="M463,556V645"/>
<rect x="404" y="426" width="18" height="36"/><rect x="404" y="508" width="18" height="37"/><path d="M404,462V508"/>
<rect x="539" y="461" width="14" height="47" stroke="#c8c8c8" stroke-width="4"/>
<path d="M582,426V461M582,508V545M735,426V461M718,461V545M705,461H737"/>
</g>
<use href="#mb" x="1344" y="145"/><use href="#mk" x="1344" y="176"/><use href="#mk" x="1344" y="277"/><use href="#mk" x="1344" y="406"/><use href="#mk" x="1344" y="535"/><use href="#mb" x="1344" y="668"/>
<rect x="1344" y="691" width="44" height="3" fill="#fff"/>
<text class="s" x="617" y="847" font-size="23" textLength="112" lengthAdjust="spacingAndGlyphs">Scale 1/100</text>
<text class="s" x="768" y="862" font-size="34" textLength="87" lengthAdjust="spacingAndGlyphs" style="fill:#e0e0e0">(B-B)</text>
<text x="877" y="858" font-size="30" fill="#d8d8d8" textLength="101" lengthAdjust="spacingAndGlyphs">المقطــــع</text>
</g>

<!-- Nav cube -->
<g transform="translate(1580,230) scale(.33333)">
<path d="M133,45L156,68H149V87H138V72H128V87H118V68H111Z" fill="#737a84"/>
<circle cx="320" cy="265" r="158" fill="none" stroke="#4e5662" stroke-width="43"/>
<rect x="245" y="190" width="160" height="150" fill="#e3e6e9" stroke="#fff" stroke-width="3"/>
<rect x="270" y="215" width="130" height="98" fill="#b7bcc5"/>
<text x="287" y="280" font-size="38" font-weight="bold" fill="#434b57" textLength="65" lengthAdjust="spacingAndGlyphs">TOP</text>
<text x="298" y="122" font-size="64" font-weight="bold" fill="#cdd2d7">N</text>
<text x="298" y="456" font-size="64" font-weight="bold" fill="#d8dce0">S</text>
<text x="122" y="288" font-size="64" font-weight="bold" fill="#cdd2d7">W</text>
<path d="M302,150H338L320,167ZM205,247L223,264L205,282ZM302,380L320,362L338,380Z" fill="#eceff1"/>
<rect x="238" y="525" width="140" height="57" rx="10" fill="#bfc4cb"/>
<text x="251" y="564" font-size="32" fill="#3f4752" textLength="84" lengthAdjust="spacingAndGlyphs">WCS</text>
</g>

<!-- UCS -->
<path d="M0,919H20" stroke="#e8e8e8" stroke-width="1.2"/><path d="M22,904L38,920M38,904L22,920" stroke="#e8e8e8" stroke-width="1.2"/>

<!-- Command line -->
<rect x="214" y="906" width="66" height="31" fill="#2f3642"/>
<path d="M221,908V933" stroke="#d8dadd" stroke-width="3" stroke-dasharray="1.6 1.6"/>
<path d="M232,917L240,925M240,917L232,925" stroke="#e8eaec" stroke-width="2.2"/>
<path d="M257,929L267,917C264,913 266,911 270,911L267,915L270,917L273,914C274,918 271,921 268,920L259,931Z" fill="#e8eaec"/>
<rect x="280" y="906" width="1216" height="31" fill="#fff"/>
<rect x="286" y="915" width="18" height="14" fill="#c9ccd0" stroke="#555"/><rect x="286" y="915" width="18" height="3" fill="#555"/><path d="M288,921L291,923L288,925M292,926H296" stroke="#222" fill="none"/>
<path d="M306,921H315L310.5,927Z" fill="#555"/>
<rect x="318" y="914" width="1" height="18" fill="#111"/>
<path d="M1482,926H1491L1486.5,921Z" fill="#4a5058"/>
<rect y="938" width="1141" height="1" fill="#343b47"/>

<!-- Layout tabs -->
<path d="M0,940H22L20,962Q18,966 14,966H0Z" fill="#3c4553"/>
<text x="-29" y="955" font-size="14" font-weight="bold" fill="#fff" textLength="39" lengthAdjust="spacingAndGlyphs">Model</text>
<path d="M26,966C30,966 30,941 36,941H103L97,960Q96,966 90,966Z" fill="#2d3441"/>
<text x="38" y="955" font-size="14" fill="#c9d1da" textLength="49" lengthAdjust="spacingAndGlyphs">Layout1</text>
<path d="M107,966C110,966 110,941 116,941H134L129,960Q128,966 122,966Z" fill="#2d3441"/>
<path d="M116,950H125M120.5,945.5V955" stroke="#a9b0b8" stroke-width="2"/>

<!-- Status bar -->
<g transform="translate(1100,900) scale(.3827,.33333)">
<g fill="#3a4352"><rect x="107" y="120" width="198" height="87"/><rect x="314" y="120" width="471" height="87"/><rect x="790" y="120" width="75" height="87"/><rect x="873" y="120" width="327" height="87"/><rect x="1207" y="120" width="123" height="87"/><rect x="1335" y="120" width="70" height="87"/><rect x="1413" y="120" width="80" height="87"/><rect x="1500" y="120" width="68" height="87"/></g>
<g fill="#5e8fbf"><rect x="316" y="124" width="69" height="80"/><rect x="392" y="124" width="71" height="80"/><rect x="592" y="124" width="70" height="80"/><rect x="668" y="124" width="70" height="80"/><rect x="875" y="124" width="70" height="80"/></g>
<g stroke="#d8dbde" stroke-width="4" fill="none"><path d="M120,147H168M120,160H168M120,173H168M130,135V190M143,135V190M156,135V190"/></g>
<path d="M200,147H238M200,163H238M200,179H238" stroke="#d8dbde" stroke-width="8" stroke-dasharray="7 9" fill="none"/>
<use href="#at" x="281" y="160"/>
<path d="M325,155H350M337,143V168" stroke="#fff" stroke-width="3"/><rect x="343" y="170" width="32" height="14" fill="#fff"/>
<path d="M403,135V188H452M403,167H420V188" stroke="#fff" stroke-width="3.5" fill="none"/>
<circle cx="497" cy="165" r="20" fill="none" stroke="#9aa0a8" stroke-width="3.5"/><path d="M497,165L525,140M480,165H525" stroke="#9aa0a8" stroke-width="3.5"/>
<use href="#at" x="564" y="160"/>
<path d="M604,185L652,140M604,185H652" stroke="#fff" stroke-width="3.5"/><circle cx="628" cy="162" r="5" fill="#fff"/>
<rect x="682" y="143" width="45" height="48" fill="none" stroke="#fff" stroke-width="3.5"/><rect x="677" y="137" width="14" height="14" fill="#5e8fbf" stroke="#fff" stroke-width="3"/>
<use href="#at" x="764" y="160"/>
<g fill="#dfe2e5"><rect x="803" y="140" width="50" height="4"/><rect x="803" y="152" width="30" height="6"/><rect x="803" y="168" width="50" height="6"/><rect x="803" y="180" width="30" height="9"/></g>
<path d="M908,135L930,190L908,175L885,190Z" fill="#fff"/><circle cx="926" cy="147" r="8" fill="none" stroke="#fff" stroke-width="3"/>
<path d="M982,137L1005,192L982,178L960,192Z" fill="#cfd3d7"/><path d="M1000,140L992,156L1006,154Z" fill="#eceef0"/>
<path d="M1059,137L1082,192L1059,178L1037,192Z" fill="#cfd3d7"/>
<text x="1113" y="178" font-size="37" font-weight="bold" fill="#dfe3e7" textLength="39" lengthAdjust="spacingAndGlyphs">1:1</text>
<use href="#at" x="1176" y="160"/>
<circle cx="1245" cy="165" r="19" fill="none" stroke="#d8dbde" stroke-width="14"/><circle cx="1245" cy="165" r="26" fill="none" stroke="#d8dbde" stroke-width="6" stroke-dasharray="8 8"/>
<use href="#at" x="1307" y="160"/>
<path d="M1345,165H1393M1369,141V189" stroke="#dfe2e5" stroke-width="6"/>
<rect x="1429" y="139" width="18" height="18" fill="none" stroke="#cfd3d7" stroke-width="3"/><circle cx="1466" cy="160" r="11" fill="none" stroke="#cfd3d7" stroke-width="3"/><path d="M1447,170L1458,190H1436Z" fill="none" stroke="#cfd3d7" stroke-width="3"/>
<rect x="1510" y="128" width="50" height="68" fill="#3c6da8"/><path d="M1522,128V170M1510,142H1538" stroke="#cfe4f5" stroke-width="4"/><rect x="1510" y="172" width="26" height="24" fill="#cc7f4a"/><path d="M1538,182L1548,194L1566,170" stroke="#47c46b" stroke-width="6" fill="none"/>
</g>

<!-- Watermark -->
<g transform="translate(720,840) scale(.33333)" fill="#b7b7b7" opacity=".41">
<text x="62" y="186" font-size="205" font-weight="bold" stroke="#b7b7b7" stroke-width="14" stroke-linejoin="round" textLength="653" lengthAdjust="spacingAndGlyphs" style="font-family:'DejaVu Sans',sans-serif">مستقل</text>
</g>
<g transform="translate(720,840) scale(.33333)" fill="#b7b7b7" opacity=".28">
<text x="70" y="305" font-size="88" font-weight="bold" textLength="645" lengthAdjust="spacingAndGlyphs" style="font-family:'DejaVu Sans',sans-serif">mostaql.com</text>
<text x="90" y="318" font-size="130" font-weight="bold" textLength="600" lengthAdjust="spacingAndGlyphs" style="font-family:'DejaVu Sans',sans-serif">مستقل.كوم</text>
</g>
</svg>
</body></html>
